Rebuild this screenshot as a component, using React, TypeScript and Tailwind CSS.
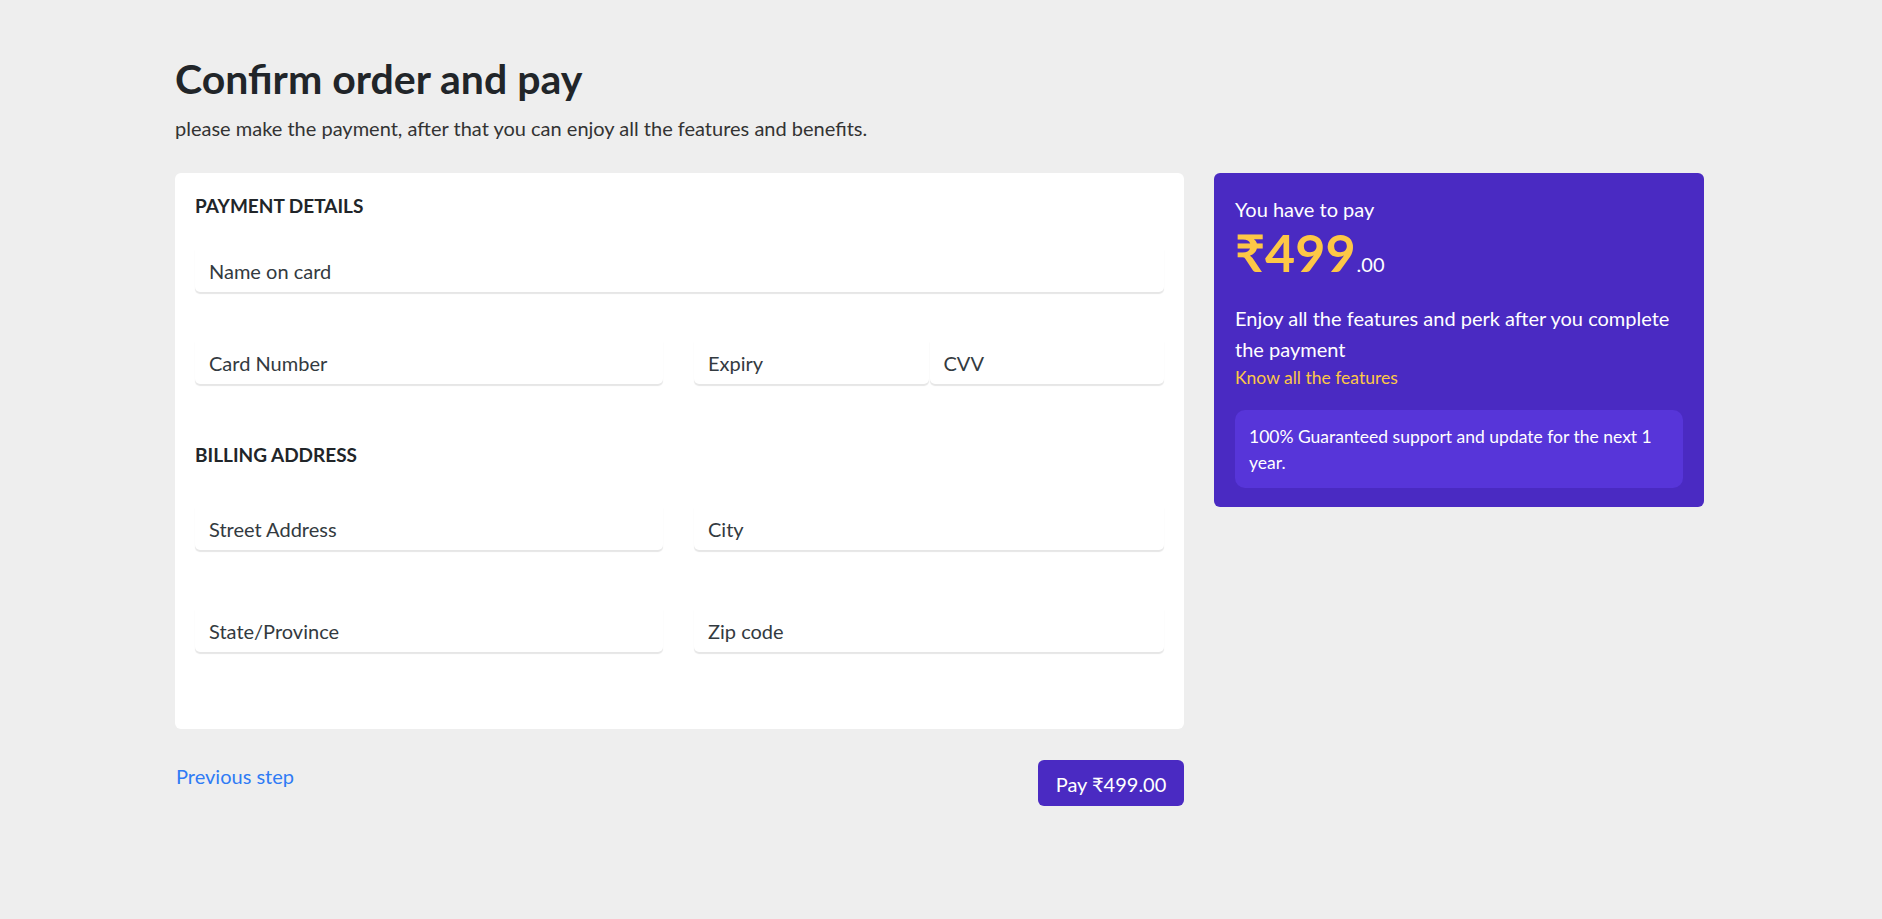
import React from "react";

function Field({ label, className = "" }: { label: string; className?: string }) {
  return (
    <div
      className={
        "h-[47px] flex items-center pl-[14px] pt-[4px] rounded-[5px] bg-white shadow-[0_2px_1px_#e6e6e6] text-[20px] text-[#333a40] " +
        className
      }
    >
      {label}
    </div>
  );
}

export default function App() {
  return (
    <div
      className="min-h-[919px] w-full bg-[#eeeeee] text-[#212529]"
      style={{ fontFamily: 'Lato, "Noto Sans", sans-serif' }}
    >
      <div className="ml-[175px] w-[1529px] pt-[55px]">
        <h1 className="text-[41px] leading-[48px] font-bold">Confirm order and pay</h1>
        <p className="mt-[10px] text-[20px] leading-[30px] text-[#333]">
          please make the payment, after that you can enjoy all the features and benefits.
        </p>

        <div className="mt-[30px] flex gap-[30px] items-start">
          <div className="w-[1009px] flex flex-col">
            <div className="h-[556px] bg-white rounded-[6px] px-[20px] pt-[19px]">
              <div className="text-[19px] leading-[27px] font-bold">PAYMENT DETAILS</div>
              <Field label="Name on card" className="mt-[26px]" />
              <div className="mt-[45px] grid grid-cols-[468px_1fr] gap-[31px]">
                <Field label="Card Number" />
                <div className="flex gap-[1px]">
                  <Field label="Expiry" className="flex-1" />
                  <Field label="CVV" className="flex-1" />
                </div>
              </div>

              <div className="mt-[57px] text-[19px] leading-[27px] font-bold">BILLING ADDRESS</div>
              <div className="mt-[35px] grid grid-cols-[468px_1fr] gap-x-[31px] gap-y-[55px]">
                <Field label="Street Address" />
                <Field label="City" />
                <Field label="State/Province" />
                <Field label="Zip code" />
              </div>
            </div>

            <div className="mt-[31px] flex justify-between items-start">
              <a href="#" className="text-[20px] leading-[30px] text-[#2f7bf5] pl-[1px] pt-[1px]">
                Previous step
              </a>
              <button className="w-[146px] h-[46px] pt-[2px] rounded-[6px] bg-[#4a2ac2] text-white text-[20px] leading-[30px]">
                Pay ₹499.00
              </button>
            </div>
          </div>

          <div className="w-[490px] bg-[#4a2ac2] rounded-[6px] px-[21px] pt-[21px] pb-[19px] text-white">
            <div className="text-[20px] leading-[30px]">You have to pay</div>
            <div className="flex items-baseline leading-[56px]">
              <span className="text-[52px] font-bold text-[#fdc746]">₹499</span>
              <span className="text-[20px] ml-[1px]">.00</span>
            </div>
            <div className="mt-[11px] text-[20px] leading-[31px] whitespace-nowrap">
              Enjoy all the features and perk after you complete
              <br />
              the payment
            </div>
            <div className="text-[17.5px] leading-[26px] text-[#fdc746]">Know all the features</div>
            <div className="mt-[19px] bg-[#5735d9] rounded-[10px] pl-[14px] pr-[14px] pt-[14px] pb-[12px] text-[17.5px] leading-[26px] whitespace-nowrap">
              100% Guaranteed support and update for the next 1
              <br />
              year.
            </div>
          </div>
        </div>
      </div>
    </div>
  );
}
